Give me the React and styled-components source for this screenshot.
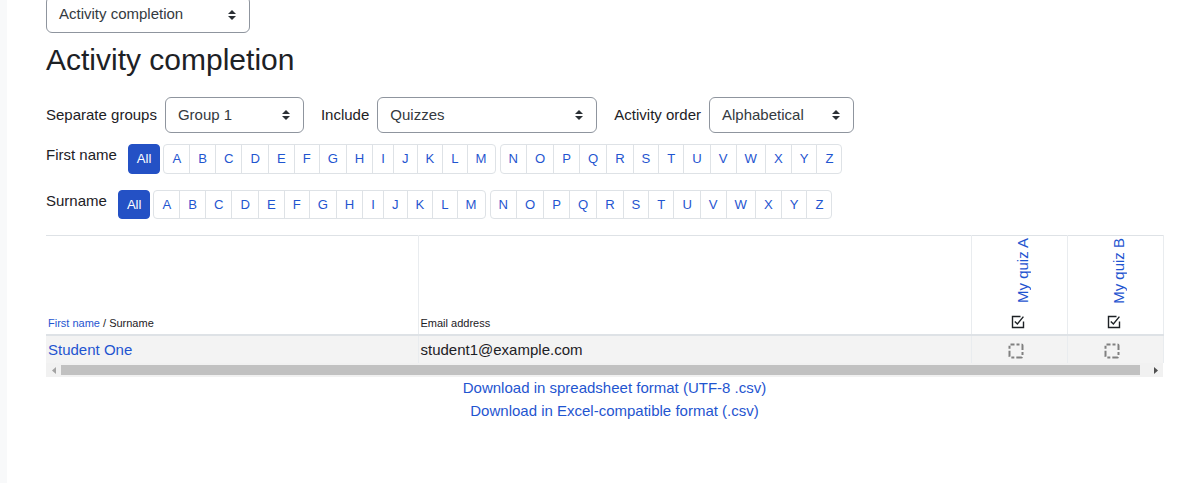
import React from 'react';
import styled, { createGlobalStyle } from 'styled-components';

const Global = createGlobalStyle`
  html, body { margin: 0; padding: 0; background: #fff; }
  body {
    font-family: "Liberation Sans", Arial, sans-serif;
    font-size: 15px;
    line-height: 1.5;
    color: #1d2125;
  }
`;

const BLUE = '#2451c5';
const LINK = '#1f55d0';

const Page = styled.div`
  display: flex;
  min-height: 483px;
  overflow: hidden;
`;

const Strip = styled.div`
  width: 7px;
  flex-shrink: 0;
  background: #f8f9fa;
`;

const Main = styled.main`
  box-sizing: border-box;
  width: 1176px;
  padding-left: 39px;
`;

const SelectBox = styled.div`
  display: flex;
  align-items: center;
  justify-content: space-between;
  box-sizing: border-box;
  width: ${(p) => p.$w}px;
  height: ${(p) => (p.$top ? 37 : 36)}px;
  margin-top: ${(p) => (p.$top ? -4 : 0)}px;
  padding: 0 13px 0 12px;
  border: 1px solid #8f959e;
  border-radius: 6px;
  background: #fff;
  color: #343a40;
  font-size: 15px;
  flex-shrink: 0;
`;

const Caret = () => (
  <svg width="8" height="10" viewBox="0 0 8 10">
    <path d="M0 4 L4 0 L8 4 Z M0 6 L4 10 L8 6 Z" fill="#2b3035" />
  </svg>
);

const Select = ({ w, top, children }) => (
  <SelectBox $w={w} $top={top}>
    <span>{children}</span>
    <Caret />
  </SelectBox>
);

const Title = styled.h2`
  margin: 9px 0 0;
  font-size: 30px;
  font-weight: 400;
  line-height: 1.2;
  color: #1d2125;
`;

const FilterRow = styled.div`
  display: flex;
  align-items: center;
  margin-top: 19px;
`;

const Label = styled.span`
  margin-right: 8px;
  white-space: nowrap;
`;

const Spacer = styled.span`
  width: 17px;
  flex-shrink: 0;
`;

const InitialBar = styled.div`
  display: flex;
  align-items: flex-start;
  margin-top: ${(p) => p.$mt}px;
`;

const InitialLabel = styled.span`
  margin-right: 11px;
  line-height: 22px;
`;

const Group = styled.div`
  display: flex;
  margin-left: ${(p) => p.$ml || 0}px;
`;

const Letter = styled.span`
  display: block;
  box-sizing: border-box;
  padding: 4px 8px;
  font-size: 13.125px;
  line-height: 19.7px;
  border: 1px solid ${(p) => (p.$active ? BLUE : '#dee2e6')};
  background: ${(p) => (p.$active ? BLUE : '#fff')};
  color: ${(p) => (p.$active ? '#fff' : LINK)};
  margin-left: -1px;
  &:first-child { margin-left: 0; border-top-left-radius: 4px; border-bottom-left-radius: 4px; }
  &:last-child { border-top-right-radius: 4px; border-bottom-right-radius: 4px; }
`;

const AM = 'ABCDEFGHIJKLM'.split('');
const NZ = 'NOPQRSTUVWXYZ'.split('');

const Initials = ({ label, mt }) => (
  <InitialBar $mt={mt}>
    <InitialLabel>{label}</InitialLabel>
    <Group>
      <Letter $active>All</Letter>
    </Group>
    <Group $ml={3}>
      {AM.map((l) => (
        <Letter key={l}>{l}</Letter>
      ))}
    </Group>
    <Group $ml={4}>
      {NZ.map((l) => (
        <Letter key={l}>{l}</Letter>
      ))}
    </Group>
  </InitialBar>
);

const TableWrap = styled.div`
  width: 1117px;
  margin-top: 16px;
`;

const Table = styled.table`
  width: 100%;
  border-collapse: collapse;
  table-layout: fixed;
  border-top: 1px solid #dee2e6;
`;

const Th = styled.th`
  height: 93px;
  padding: 2px 2px 3px;
  vertical-align: bottom;
  text-align: left;
  font-weight: 400;
  font-size: 11px;
  line-height: 16px;
  border-bottom: 2px solid #dee2e6;
  border-left: ${(p) => (p.$first ? 'none' : '1px solid #e9ecef')};
  border-right: ${(p) => (p.$last ? '1px solid #e9ecef' : 'none')};
`;

const Td = styled.td`
  padding: 2px;
  height: 23px;
  line-height: 22px;
  background: #f3f3f3;
  text-align: ${(p) => (p.$center ? 'center' : 'left')};
  border-left: ${(p) => (p.$first ? 'none' : '1px solid #e9ecef')};
  border-right: ${(p) => (p.$last ? '1px solid #e9ecef' : 'none')};
  vertical-align: middle;
`;

const Link = styled.a`
  color: ${LINK};
  text-decoration: none;
`;

const ActivityHead = styled.div`
  display: flex;
  flex-direction: column;
  align-items: center;
  justify-content: flex-end;
  height: 93px;
`;

const Rotated = styled.span`
  writing-mode: vertical-rl;
  transform: rotate(180deg);
  white-space: nowrap;
  flex-shrink: 0;
  font-size: 15px;
  line-height: 22px;
  color: ${LINK};
  margin-left: 7px;
`;

const HeadIcon = styled.span`
  display: block;
  margin-top: 12px;
  margin-bottom: 2px;
  margin-left: -3px;
  height: 14px;
`;

const CheckIcon = () => (
  <svg width="14" height="14" viewBox="0 0 14 14">
    <path
      d="M9.5 1.5 H1.5 V12.5 H12.5 V6.5"
      fill="none"
      stroke="#1d2125"
      strokeWidth="1.4"
    />
    <path
      d="M3.8 6.4 L6.4 9 L12.4 1.6"
      fill="none"
      stroke="#1d2125"
      strokeWidth="1.4"
    />
  </svg>
);

const DashIcon = styled.span`
  display: inline-block;
  width: 16px;
  height: 16px;
  vertical-align: middle;
  margin-left: -7px;
`;

const DashedBox = () => (
  <DashIcon>
    <svg width="16" height="16" viewBox="0 0 16 16">
      <rect
        x="1.5"
        y="1.5"
        width="13"
        height="13"
        rx="1"
        fill="none"
        stroke="#808080"
        strokeWidth="2"
        strokeLinejoin="round"
        strokeDasharray="6 2 3 2"
        strokeDashoffset="2"
      />
    </svg>
  </DashIcon>
);

const ScrollBar = styled.div`
  display: flex;
  align-items: center;
  height: 14px;
  background: #f1f1f1;
`;

const ScrollArrow = styled.span`
  display: flex;
  align-items: center;
  justify-content: ${(p) => (p.$end ? 'flex-end' : 'center')};
  box-sizing: border-box;
  width: ${(p) => (p.$end ? 23 : 15)}px;
  padding-right: ${(p) => (p.$end ? 5 : 0)}px;
  height: 14px;
  flex-shrink: 0;
`;

const Thumb = styled.span`
  flex: 1;
  height: 10px;
  background: #c1c1c1;
`;

const Downloads = styled.div`
  display: flex;
  flex-direction: column;
  align-items: center;
  margin-top: -1px;
  line-height: 23px;
`;

export default function App() {
  return (
    <>
      <Global />
      <Page>
        <Strip />
        <Main>
          <Select w={204} top>
            Activity completion
          </Select>
          <Title>Activity completion</Title>
          <FilterRow>
            <Label>Separate groups</Label>
            <Select w={139}>Group 1</Select>
            <Spacer />
            <Label>Include</Label>
            <Select w={220}>Quizzes</Select>
            <Spacer />
            <Label>Activity order</Label>
            <Select w={145}>Alphabetical</Select>
          </FilterRow>
          <Initials label="First name" mt={11} />
          <Initials label="Surname" mt={16} />
          <TableWrap>
            <Table>
              <colgroup>
                <col style={{ width: 372 }} />
                <col style={{ width: 553 }} />
                <col style={{ width: 96 }} />
                <col style={{ width: 96 }} />
              </colgroup>
              <thead>
                <tr>
                  <Th $first>
                    <Link href="#">First name</Link> / Surname
                  </Th>
                  <Th>Email address</Th>
                  <Th>
                    <ActivityHead>
                      <Rotated>My quiz A</Rotated>
                      <HeadIcon>
                        <CheckIcon />
                      </HeadIcon>
                    </ActivityHead>
                  </Th>
                  <Th $last>
                    <ActivityHead>
                      <Rotated>My quiz B</Rotated>
                      <HeadIcon>
                        <CheckIcon />
                      </HeadIcon>
                    </ActivityHead>
                  </Th>
                </tr>
              </thead>
              <tbody>
                <tr>
                  <Td $first>
                    <Link href="#">Student One</Link>
                  </Td>
                  <Td>student1@example.com</Td>
                  <Td $center>
                    <DashedBox />
                  </Td>
                  <Td $center $last>
                    <DashedBox />
                  </Td>
                </tr>
              </tbody>
            </Table>
            <ScrollBar>
              <ScrollArrow>
                <svg width="4" height="7" viewBox="0 0 4 7">
                  <path d="M4 0 L0 3.5 L4 7 Z" fill="#a3a3a3" />
                </svg>
              </ScrollArrow>
              <Thumb />
              <ScrollArrow $end>
                <svg width="4" height="7" viewBox="0 0 4 7">
                  <path d="M0 0 L4 3.5 L0 7 Z" fill="#505050" />
                </svg>
              </ScrollArrow>
            </ScrollBar>
          </TableWrap>
          <Downloads>
            <Link href="#">Download in spreadsheet format (UTF-8 .csv)</Link>
            <Link href="#">Download in Excel-compatible format (.csv)</Link>
          </Downloads>
        </Main>
      </Page>
    </>
  );
}
